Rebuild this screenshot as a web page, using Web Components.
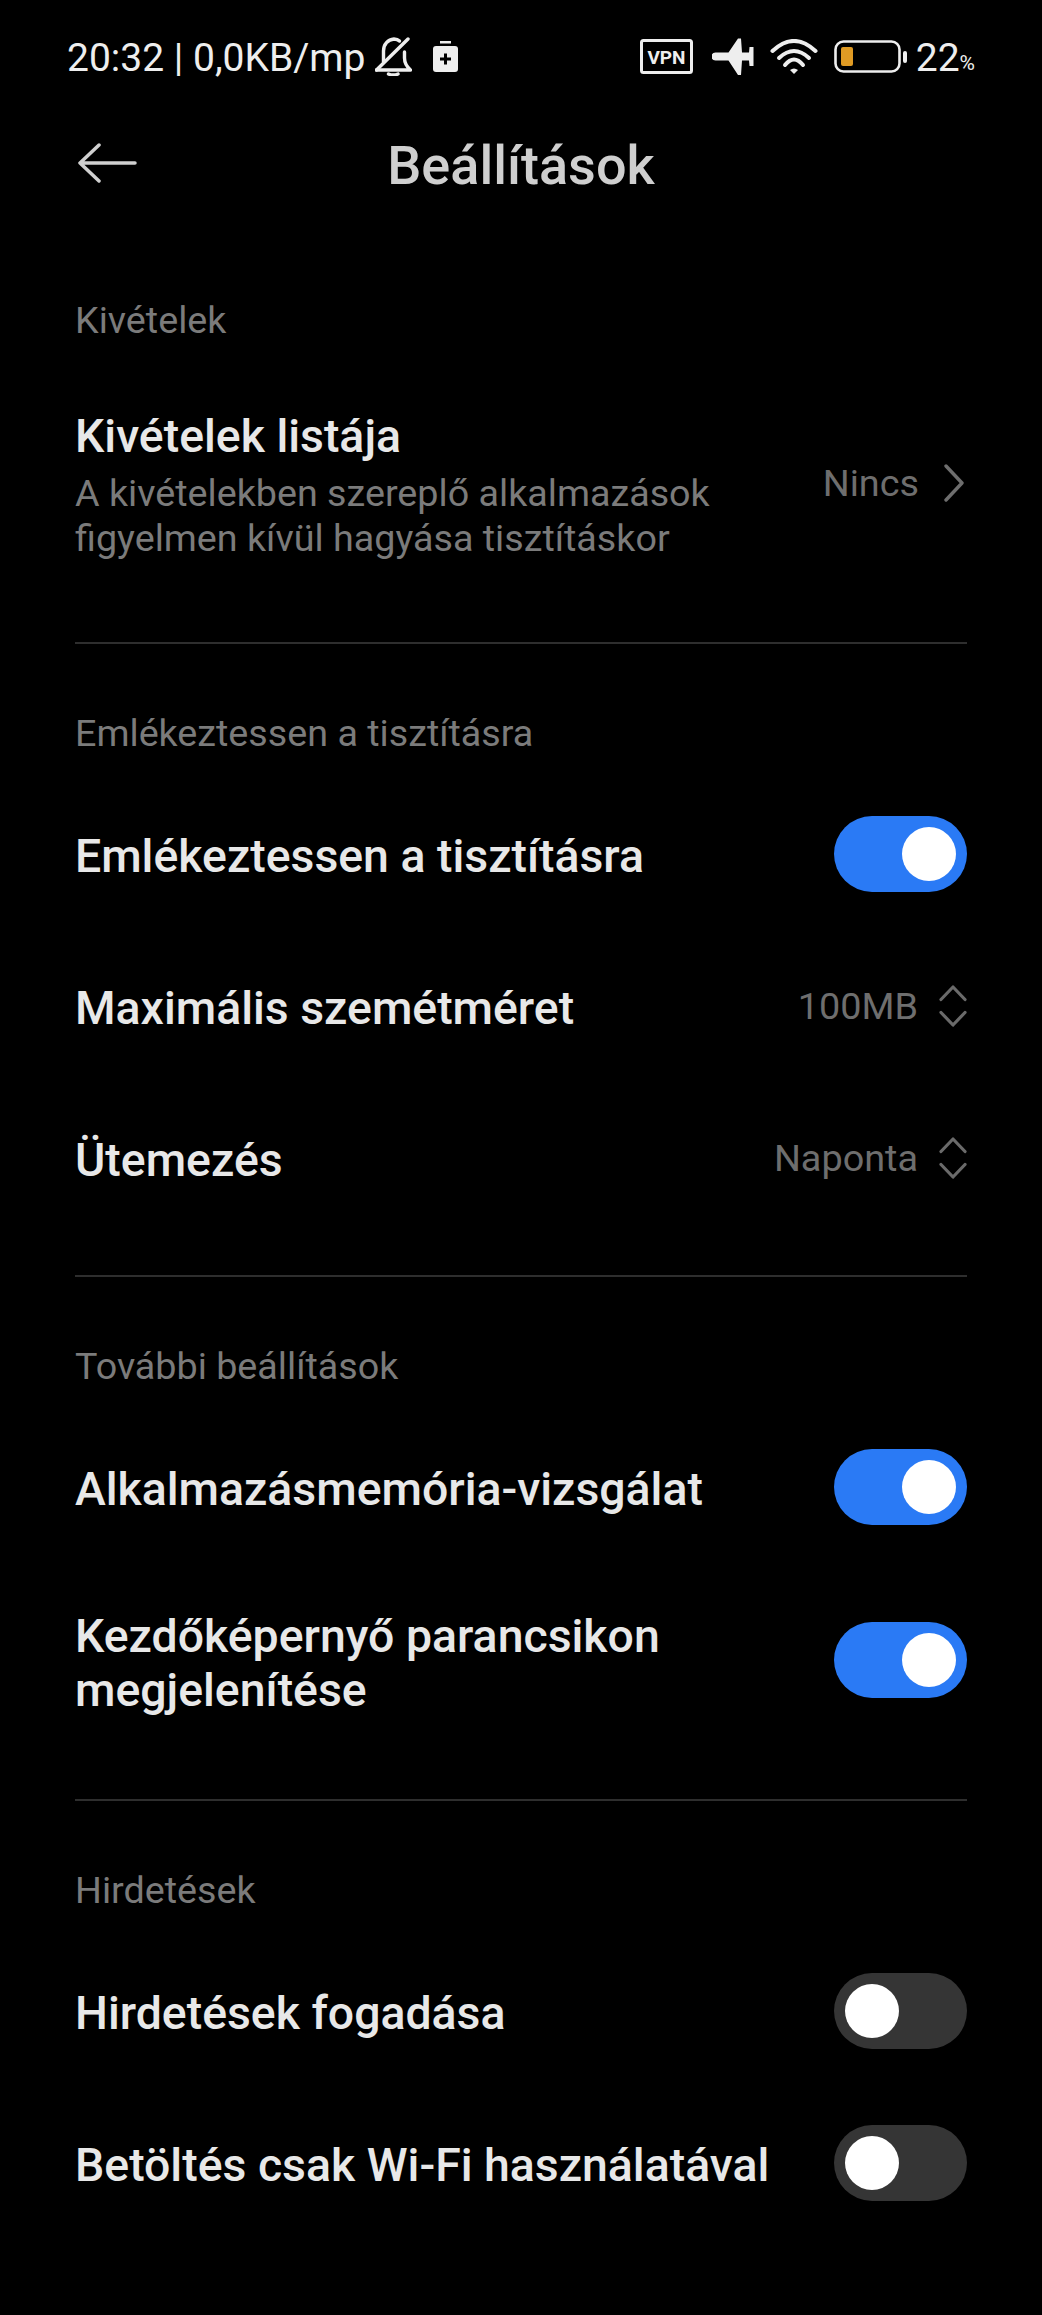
<!DOCTYPE html>
<html>
<head>
<meta charset="utf-8">
<title>Beállítások</title>
<style>
  html, body { margin: 0; background: #000; }
  body { font-family: Roboto, "Liberation Sans", sans-serif; width: 1042px; height: 2315px; overflow: hidden; }
</style>
</head>
<body>
<status-bar></status-bar>
<title-bar>Beállítások</title-bar>

<settings-section label="Kivételek" first>
  <setting-row sub="A kivételekben szereplő alkalmazások|figyelmen kívül hagyása tisztításkor" value="Nincs" control="chevron">Kivételek listája</setting-row>
</settings-section>

<settings-section label="Emlékeztessen a tisztításra">
  <setting-row control="on">Emlékeztessen a tisztításra</setting-row>
  <setting-row value="100MB" control="updown">Maximális szemétméret</setting-row>
  <setting-row value="Naponta" control="updown">Ütemezés</setting-row>
</settings-section>

<settings-section label="További beállítások">
  <setting-row control="on">Alkalmazásmemória-vizsgálat</setting-row>
  <setting-row control="on" tall>Kezdőképernyő parancsikon<br>megjelenítése</setting-row>
</settings-section>

<settings-section label="Hirdetések" last>
  <setting-row control="off">Hirdetések fogadása</setting-row>
  <setting-row control="off">Betöltés csak Wi-Fi használatával</setting-row>
</settings-section>

<script>
class StatusBar extends HTMLElement {
  constructor() {
    super();
    this.attachShadow({ mode: "open" });
  }

  connectedCallback() {
    this.shadowRoot.innerHTML = `
      <style>
        :host { display: flex; align-items: center; height: 76px; padding: 0 67px; margin-top: 20px; color: #eee; font-size: 39px; }
        .left, .right { display: flex; align-items: center; }
        .right { margin-left: auto; }
        svg { display: block; flex: none; margin-bottom: 3px; }
        .pct { font-size: 21px; margin-top: 9px; }
      </style>
      <div class="left">
        <span>20:32 | 0,0KB/mp</span>
        <svg style="margin-left:10px" width="37" height="39" viewBox="0 0 37 39" fill="none" stroke="#eee" stroke-width="3.400" stroke-linecap="round" stroke-linejoin="round">
          <path d="M1.500 33 L33 2"/>
          <path d="M1.500 33 H35.500 C31 29 29.500 26 29.500 21 V15"/>
          <path d="M8.500 25 V14 C8.500 7 13 2.500 19 2 C21 2 23 2.500 24.500 4"/>
          <path d="M13.500 37 Q18 39 23 37"/>
        </svg>
        <svg style="margin-left:21px" width="25" height="31" viewBox="0 0 25 31">
          <rect x="7" y="0" width="11" height="2.500" fill="#eee"/>
          <rect x="0" y="5" width="25" height="26" rx="3" fill="#eee"/>
          <path d="M12.500 12.500 V23.500 M7 18 H18" stroke="#000" stroke-width="3"/>
        </svg>
      </div>
      <div class="right">
        <svg width="53" height="35" viewBox="0 0 53 35">
          <rect x="1.500" y="1.500" width="50" height="32" rx="2" fill="none" stroke="#eee" stroke-width="3"/>
          <text x="26.500" y="24.500" text-anchor="middle" font-family="Roboto, sans-serif" font-weight="700" font-size="19" fill="#eee">VPN</text>
        </svg>
        <svg style="margin-left:19px" width="42" height="37" viewBox="0 0 42 37" fill="#eee">
          <path d="M3.500 14.500 H16.500 L26 0.500 H29 L30 14.500 H37 L37.500 9 H41.500 V28 H37.500 L37 22.500 H30 L29 37 H26 L16.500 22.500 H3.500 A4 4 0 0 1 3.500 14.500 Z"/>
        </svg>
        <svg style="margin-left:16px" width="48" height="36" viewBox="0 0 48 36" fill="none" stroke="#eee" stroke-width="4" stroke-linecap="round">
          <path d="M2.500 12 Q24 -8 45.500 12"/>
          <path d="M9 19 Q24 5 39 19"/>
          <path d="M15 26 Q24 15 33 26"/>
          <path d="M24 35 L20 31 Q24 28 28 31 Z" fill="#eee" stroke="none"/>
        </svg>
        <svg style="margin-left:16px" width="73" height="33" viewBox="0 0 73 33">
          <rect x="1.500" y="1.500" width="64" height="30" rx="8" fill="none" stroke="#eee" stroke-width="2.600"/>
          <rect x="7" y="7" width="12" height="19" rx="2" fill="#e09b24"/>
          <rect x="69" y="11" width="4" height="12" rx="2" fill="#eee"/>
        </svg>
        <span style="margin-left:9px">22</span><span class="pct">%</span>
      </div>`;
  }
}

class TitleBar extends HTMLElement {
  constructor() {
    super();
    this.attachShadow({ mode: "open" });
  }

  connectedCallback() {
    this.shadowRoot.innerHTML = `
      <style>
        :host { display: flex; position: relative; align-items: center; justify-content: center; height: 130px; margin-top: 4px; color: #cfcfcf; font-size: 54px; font-weight: 500; }
        svg { position: absolute; left: 77px; top: 43px; }
      </style>
      <svg width="62" height="40" viewBox="0 0 62 40" fill="none" stroke="#d0d0d0" stroke-width="3.500" stroke-linecap="round" stroke-linejoin="round">
        <path d="M58 20 H3 M22 2 L3 20 L22 38"/>
      </svg>
      <slot></slot>`;
  }
}

class SettingsSection extends HTMLElement {
  constructor() {
    super();
    this.attachShadow({ mode: "open" });
  }

  connectedCallback() {
    this.shadowRoot.innerHTML = `
      <style>
        :host { display: block; margin: 0 75px; padding-top: 64px; padding-bottom: 41px; border-bottom: 2px solid #2e2e2e; }
        :host([first]) { padding-top: 65px; }
        :host([last]) { border-bottom: 0; }
        .label { height: 50px; line-height: 50px; margin-bottom: 20px; color: #7b7b7b; font-size: 37.700px; }
      </style>
      <div class="label">${this.getAttribute("label")}</div>
      <slot></slot>`;
  }
}

class SettingRow extends HTMLElement {
  constructor() {
    super();
    this.attachShadow({ mode: "open" });
  }

  connectedCallback() {
    const sub = this.getAttribute("sub");
    const value = this.getAttribute("value");
    const control = this.getAttribute("control");
    let right = "";
    if (value) right += `<span class="value">${value}</span>`;
    if (control === "chevron") {
      right += `<svg style="margin:0 2px 0 24px" width="22" height="38" viewBox="0 0 22 38" fill="none" stroke="#6e6e6e" stroke-width="3.400" stroke-linecap="round" stroke-linejoin="round"><path d="M3 2 L19 19 L3 36"/></svg>`;
    } else if (control === "updown") {
      right += `<svg style="margin-left:21px" width="28" height="42" viewBox="0 0 28 42" fill="none" stroke="#6a6a6a" stroke-width="3.200" stroke-linecap="round" stroke-linejoin="round"><path d="M2 14.500 L14 2 L26 14.500 M2 27.500 L14 40 L26 27.500"/></svg>`;
    } else if (control === "on" || control === "off") {
      right += `<toggle-switch ${control === "on" ? "checked" : ""}></toggle-switch>`;
    }
    this.shadowRoot.innerHTML = `
      <style>
        :host { display: flex; align-items: center; justify-content: space-between; padding: 38px 0; }
        :host([tall]) { padding: 43.500px 0; }
        :host([tall]) .right { margin-bottom: 2px; }
        :host([sub]) { padding: 44px 0 40px; }
        :host([sub]) .right { margin-bottom: 4px; }
        .title { color: #e8e8e8; font-size: 46.400px; font-weight: 500; line-height: 54px; margin: 2px 0 -2px; }
        :host([sub]) .title { margin: 0; }
        :host(:not([sub]):not([tall])) .title { line-height: 76px; }
        .sub { color: #7b7b7b; font-size: 37.700px; line-height: 45px; margin-top: 8px; }
        .right { display: flex; align-items: center; flex: none; }
        .value { color: #6e6e6e; font-size: 37.800px; }
        svg { display: block; }
      </style>
      <div>
        <div class="title"><slot></slot></div>
        ${sub ? `<div class="sub">${sub.split("|").join("<br>")}</div>` : ""}
      </div>
      <div class="right">${right}</div>`;
  }
}

class ToggleSwitch extends HTMLElement {
  constructor() {
    super();
    this.attachShadow({ mode: "open" });
    this.shadowRoot.innerHTML = `
      <style>
        :host { display: flex; align-items: center; width: 133px; height: 76px; padding: 0 11px; box-sizing: border-box; border-radius: 38px; background: #353535; justify-content: flex-start; }
        :host([checked]) { background: #2a7af5; justify-content: flex-end; }
        i { display: block; width: 54px; height: 54px; border-radius: 50%; background: #fff; }
      </style>
      <i></i>`;
  }
}

customElements.define("status-bar", StatusBar);
customElements.define("title-bar", TitleBar);
customElements.define("settings-section", SettingsSection);
customElements.define("setting-row", SettingRow);
customElements.define("toggle-switch", ToggleSwitch);
</script>
</body>
</html>
